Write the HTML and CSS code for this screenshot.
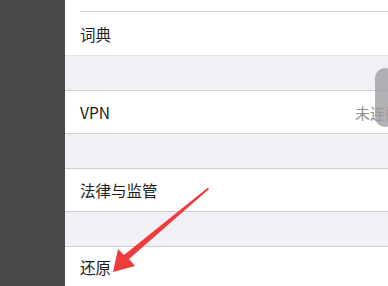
FILE: index.html
```html
<!DOCTYPE html>
<html lang="zh">
<head>
<meta charset="utf-8">
<link rel="stylesheet" href="styles.css">
</head>
<body>
<div class="screen">
  <div class="side"></div>
  <div class="main">
    <div class="top"></div>
    <div class="row first"><span class="label">词典</span></div>
    <div class="gap faint"></div>
    <div class="row"><span class="label">VPN</span><span class="value">未连接</span></div>
    <div class="gap"></div>
    <div class="row"><span class="label">法律与监管</span></div>
    <div class="gap"></div>
    <div class="row last"><span class="label">还原</span></div>
    <div class="thumb"></div>
    <svg class="arrow" width="388" height="286" viewBox="0 0 388 286">
      <path d="M208 187.5 L209 189 L129 259 L135 266 L113 272 L118 249 L124 255 Z" fill="#ee3b3b"/>
    </svg>
  </div>
</div>
</body>
</html>
```

FILE: styles.css
```css
html, body { margin: 0; padding: 0; }
body {
  width: 388px;
  height: 286px;
  overflow: hidden;
  font-family: "Noto Sans CJK SC", "Liberation Sans", sans-serif;
  background: #fff;
}
.screen { display: flex; height: 286px; }
.side { width: 65px; background: #4a4a4a; flex: none; }
.main { flex: 1; position: relative; display: flex; flex-direction: column; overflow: hidden; }
.top { height: 11px; background: #fff; flex: none; }
.row {
  height: 42px;
  flex: none;
  background: #fff;
  display: flex;
  align-items: center;
  padding-left: 15px;
  border-top: 1px solid #cfcdd3;
}
.row.first { margin-left: 15px; padding-left: 0; height: 43px; }
.row.last { flex: 1; }
.label { font-size: 15.5px; color: #1a1a1a; }
.value { margin-left: auto; margin-right: -12px; font-size: 15px; color: #8e8e93; white-space: nowrap; }
.gap { height: 34px; flex: none; background: #f2f0f7; border-top: 1px solid #cfcdd3; }
.gap.faint { border-top-color: #e6e4ea; }
.thumb {
  position: absolute;
  left: 310px;
  top: 68px;
  width: 20px;
  height: 59px;
  border-radius: 11px;
  background: rgba(160, 158, 163, 0.8);
}
.arrow { position: absolute; left: -65px; top: 0; pointer-events: none; }
```
